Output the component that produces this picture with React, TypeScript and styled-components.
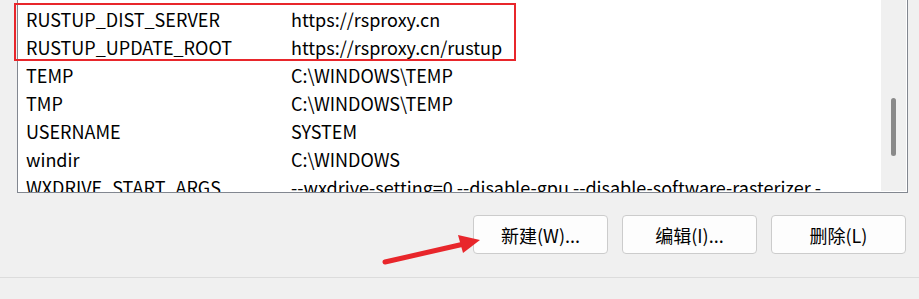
import styled, { createGlobalStyle } from "styled-components";

const GlobalStyle = createGlobalStyle`
	html, body {
		margin: 0;
		padding: 0;
		background: #f0f0f0;
		overflow: hidden;
	}
	body {
		font-family: "Noto Sans CJK SC", "Noto Sans", sans-serif;
		color: #000000;
	}
`;

interface EnvVar {
	name: string;
	value: string;
}

const VARIABLES: EnvVar[] = [
	{ name: "RUSTUP_DIST_SERVER", value: "https://rsproxy.cn" },
	{ name: "RUSTUP_UPDATE_ROOT", value: "https://rsproxy.cn/rustup" },
	{ name: "TEMP", value: "C:\\WINDOWS\\TEMP" },
	{ name: "TMP", value: "C:\\WINDOWS\\TEMP" },
	{ name: "USERNAME", value: "SYSTEM" },
	{ name: "windir", value: "C:\\WINDOWS" },
	{
		name: "WXDRIVE_START_ARGS",
		value: "--wxdrive-setting=0 --disable-gpu --disable-software-rasterizer -",
	},
];

const Page = styled.div`
	position: relative;
	width: 919px;
	height: 299px;
	display: flex;
	flex-direction: column;
	background: #f0f0f0;
`;

const ListPanel = styled.div`
	margin-left: 17px;
	width: 889px;
	height: 192px;
	display: flex;
	background: #ffffff;
	border: 1px solid #828790;
	border-top: none;
	overflow: hidden;
`;

const Rows = styled.div`
	flex: 1;
	min-width: 0;
	padding-top: 5px;
	overflow: hidden;
`;

const Row = styled.div`
	display: grid;
	grid-template-columns: 265px 1fr;
	height: 28px;
	line-height: 28px;
	padding-left: 8px;
	font-size: 18px;
	white-space: nowrap;
`;

const Cell = styled.span`
	overflow: hidden;
`;

const ScrollTrack = styled.div`
	width: 25px;
	height: 191px;
	margin-right: 1px;
	background: #f0f0f0;
	display: flex;
	justify-content: center;
	padding-top: 98px;
	box-sizing: border-box;
`;

const Thumb = styled.div`
	width: 5px;
	height: 58px;
	border-radius: 3px;
	background: #8a8a8a;
`;

const ButtonRow = styled.div`
	display: flex;
	justify-content: flex-end;
	gap: 14px;
	margin-top: 22px;
	padding-right: 13px;
`;

const Button = styled.button`
	width: 135px;
	height: 39px;
	box-sizing: border-box;
	border: 1px solid #cccccc;
	border-radius: 4px;
	background: #fdfdfd;
	font-family: "Noto Sans CJK SC", sans-serif;
	font-size: 18px;
	color: #000000;
	padding: 0;
`;

const Divider = styled.div`
	margin-top: 23px;
	height: 1px;
	background: #dcdcdc;
`;

const Highlight = styled.div`
	position: absolute;
	left: 14px;
	top: 3px;
	width: 498px;
	height: 54px;
	border: 2px solid #e8262b;
`;

const ArrowLayer = styled.svg`
	position: absolute;
	left: 0;
	top: 0;
	pointer-events: none;
`;

export default function App() {
	return (
		<>
			<GlobalStyle />
			<Page>
				<ListPanel>
					<Rows>
						{VARIABLES.map((v) => (
							<Row key={v.name}>
								<Cell>{v.name}</Cell>
								<Cell>{v.value}</Cell>
							</Row>
						))}
					</Rows>
					<ScrollTrack>
						<Thumb />
					</ScrollTrack>
				</ListPanel>
				<ButtonRow>
					<Button>新建(W)...</Button>
					<Button>编辑(I)...</Button>
					<Button>删除(L)</Button>
				</ButtonRow>
				<Divider />
				<Highlight />
				<ArrowLayer width={919} height={299}>
					<line x1={385} y1={262} x2={464} y2={244} stroke="#e8262b" strokeWidth={5} strokeLinecap="round" />
					<polygon points="480,240 458,235 463,253" fill="#e8262b" />
				</ArrowLayer>
			</Page>
		</>
	);
}
